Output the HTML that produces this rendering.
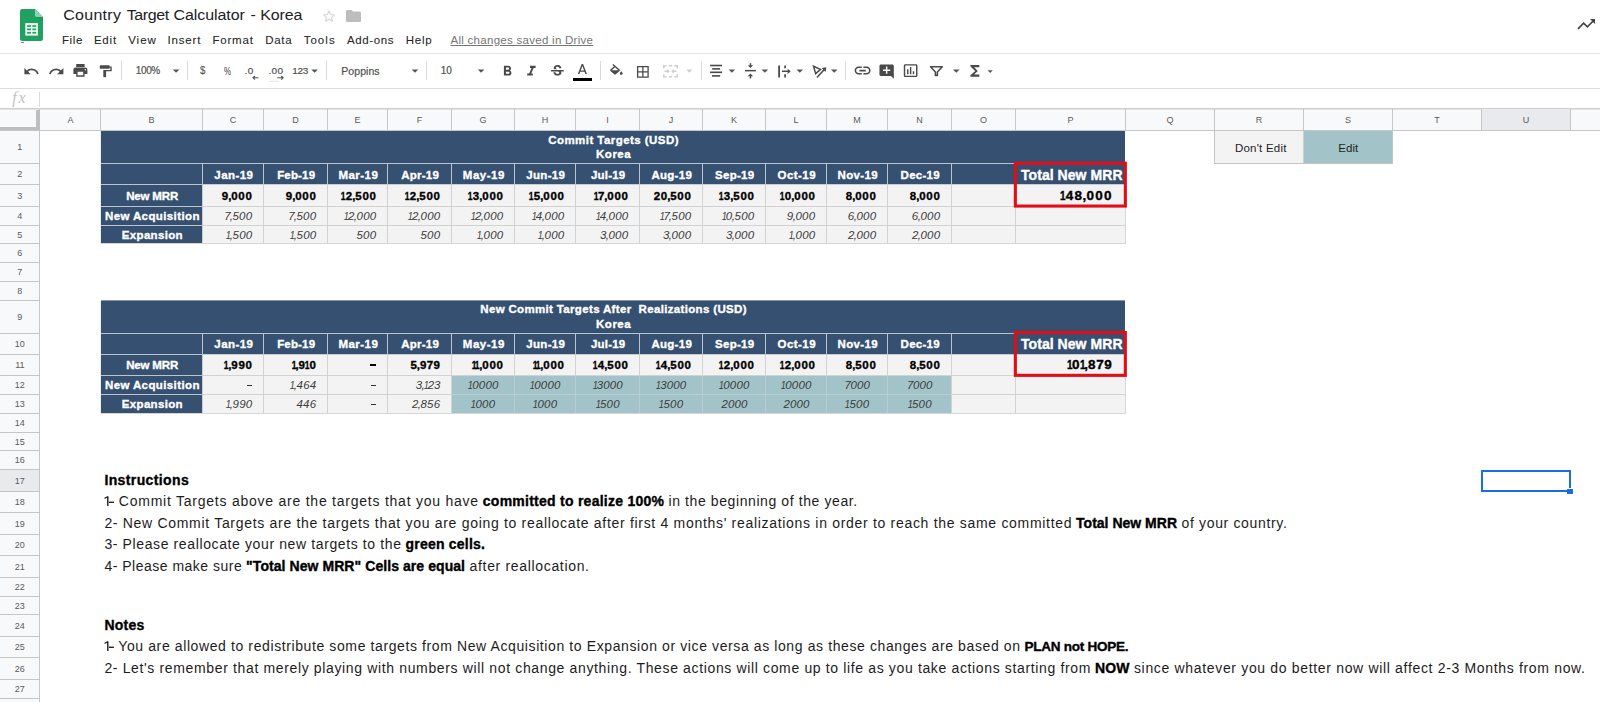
<!DOCTYPE html>
<html><head><meta charset="utf-8"><title>Country Target Calculator - Korea</title>
<style>
html,body{margin:0;padding:0;}
body{width:1600px;height:702px;overflow:hidden;background:#fff;position:relative;font-family:"Liberation Sans",sans-serif;}
.t{position:absolute;white-space:pre;line-height:20px;height:20px;}
.r{position:absolute;}
svg{position:absolute;overflow:visible;}
</style></head><body>

<svg style="left:20px;top:9px" width="23" height="32" viewBox="0 0 23 32">
<path d="M2.2 0 H15 L23 8 V29.8 Q23 32 20.8 32 H2.2 Q0 32 0 29.8 V2.2 Q0 0 2.2 0Z" fill="#20a162"/>
<path d="M15 0 L23 8 H16.8 Q15 8 15 6.2Z" fill="#8ed1b1"/>
<path d="M15.6 8 H23 V12.5 Z" fill="#1a8a52" opacity="0.45"/>
<rect x="5.3" y="14.1" width="12.6" height="12.5" fill="#eef8f2"/>
<g fill="#22a163"><rect x="7.1" y="16.2" width="3.9" height="1.7"/><rect x="12.4" y="16.2" width="3.7" height="1.7"/><rect x="7.1" y="19.5" width="3.9" height="1.7"/><rect x="12.4" y="19.5" width="3.7" height="1.7"/><rect x="7.1" y="22.9" width="3.9" height="1.7"/><rect x="12.4" y="22.9" width="3.7" height="1.7"/></g>
</svg>
<div class="r" style="left:20.8px;top:42px;width:2.8px;height:1px;background:#6b8f7c;"></div>
<span class="t" style="left:63.30px;top:5px;font-size:16px;letter-spacing:0.263px;transform:scaleY(0.915);transform-origin:0 15px;color:#202124;">Country</span>
<span class="t" style="left:126.70px;top:5px;font-size:16px;letter-spacing:-0.414px;transform:scaleY(0.915);transform-origin:0 15px;color:#202124;">Target</span>
<span class="t" style="left:173.60px;top:5px;font-size:16px;letter-spacing:-0.092px;transform:scaleY(0.915);transform-origin:0 15px;color:#202124;">Calculator</span>
<span class="t" style="left:250.40px;top:5px;font-size:16px;transform:scaleY(0.915);transform-origin:0 15px;color:#202124;">-</span>
<span class="t" style="left:260.30px;top:5px;font-size:16px;letter-spacing:-0.174px;transform:scaleY(0.915);transform-origin:0 15px;color:#202124;">Korea</span>
<svg style="left:321.5px;top:9px" width="14" height="14" viewBox="0 0 24 24"><path d="M12 3.2l2.7 6.2 6.7.6-5.1 4.4 1.5 6.6L12 17.5 6.2 21l1.5-6.6L2.6 10l6.7-.6z" fill="none" stroke="#d5d5d5" stroke-width="2" stroke-linejoin="round"/></svg>
<svg style="left:346px;top:10px" width="15" height="12" viewBox="0 0 15 12"><path d="M1.2 0 H5.5 L7 1.6 H13.8 Q15 1.6 15 2.8 V10.8 Q15 12 13.8 12 H1.2 Q0 12 0 10.8 V1.2 Q0 0 1.2 0Z" fill="#bdbdbd"/></svg>
<span class="t" style="left:61.90px;top:30px;font-size:11.5px;letter-spacing:0.657px;-webkit-text-stroke:0.08px #252525;color:#252525;">File</span>
<span class="t" style="left:93.90px;top:30px;font-size:11.5px;letter-spacing:0.811px;-webkit-text-stroke:0.08px #252525;color:#252525;">Edit</span>
<span class="t" style="left:128.15px;top:30px;font-size:11.5px;letter-spacing:1.011px;-webkit-text-stroke:0.08px #252525;color:#252525;">View</span>
<span class="t" style="left:167.40px;top:30px;font-size:11.5px;letter-spacing:0.848px;-webkit-text-stroke:0.08px #252525;color:#252525;">Insert</span>
<span class="t" style="left:212.40px;top:30px;font-size:11.5px;letter-spacing:0.816px;-webkit-text-stroke:0.08px #252525;color:#252525;">Format</span>
<span class="t" style="left:265.15px;top:30px;font-size:11.5px;letter-spacing:0.736px;-webkit-text-stroke:0.08px #252525;color:#252525;">Data</span>
<span class="t" style="left:303.65px;top:30px;font-size:11.5px;letter-spacing:1.038px;-webkit-text-stroke:0.08px #252525;color:#252525;">Tools</span>
<span class="t" style="left:346.90px;top:30px;font-size:11.5px;letter-spacing:0.611px;-webkit-text-stroke:0.08px #252525;color:#252525;">Add-ons</span>
<span class="t" style="left:405.65px;top:30px;font-size:11.5px;letter-spacing:0.783px;-webkit-text-stroke:0.08px #252525;color:#252525;">Help</span>
<span class="t" style="left:450.50px;top:30px;font-size:11.5px;letter-spacing:0.279px;color:#757575;text-decoration:underline;text-underline-offset:1px;">All changes saved in Drive</span>
<svg style="left:0;top:0" width="1600" height="50"><path d="M1578 28.8 L1583.6 23.2 L1587.4 26.9 L1593.2 21" fill="none" stroke="#444" stroke-width="1.7"/><path d="M1590 19 H1595 V24Z" fill="#444"/></svg>
<div class="r" style="left:0px;top:53px;width:1600px;height:1px;background:#e3e3e3;"></div>
<div class="r" style="left:0px;top:88px;width:1600px;height:1px;background:#dcdcdc;"></div>
<div class="r" style="left:0px;top:108px;width:1600px;height:1px;background:#cfcfcf;"></div>
<svg style="left:23.00px;top:62.70px" width="16.80" height="16.80" viewBox="0 0 24 24"><path d="M12.5 8c-2.65 0-5.05.99-6.9 2.6L2 7v9h9l-3.62-3.62c1.39-1.16 3.16-1.88 5.12-1.88 3.54 0 6.55 2.31 7.6 5.5l2.37-.78C21.08 11.03 17.15 8 12.5 8z" fill="#4a4a4a" /></svg>
<svg style="left:48.00px;top:62.70px" width="16.80" height="16.80" viewBox="0 0 24 24"><path d="M18.4 10.6C16.55 8.99 14.15 8 11.5 8c-4.65 0-8.58 3.03-9.96 7.22L3.9 16c1.05-3.19 4.05-5.5 7.6-5.5 1.95 0 3.73.72 5.12 1.88L13 16h9V7l-3.6 3.6z" fill="#4a4a4a" /></svg>
<svg style="left:72.30px;top:62.40px" width="16.80" height="16.80" viewBox="0 0 24 24"><path d="M19 8H5c-1.66 0-3 1.34-3 3v6h4v4h12v-4h4v-6c0-1.66-1.34-3-3-3zm-3 11H8v-5h8v5zm3-7c-.55 0-1-.45-1-1s.45-1 1-1 1 .45 1 1-.45 1-1 1zm-1-9H6v4h12V3z" fill="#4a4a4a" /></svg>
<svg style="left:96.9px;top:63.5px" width="16.8" height="14.4" viewBox="0 0 24 24" preserveAspectRatio="none"><path d="M18 4V3c0-.55-.45-1-1-1H5c-.55 0-1 .45-1 1v4c0 .55.45 1 1 1h12c.55 0 1-.45 1-1V6h1v4H9v11c0 .55.45 1 1 1h2c.55 0 1-.45 1-1v-9h8V4h-3z" fill="#4a4a4a"/></svg>
<div class="r" style="left:121px;top:61px;width:1px;height:19px;background:#dadada;"></div>
<span class="t" style="left:135.80px;top:61px;font-size:10px;letter-spacing:-0.392px;-webkit-text-stroke:0.2px #505050;color:#505050;">100%</span>
<svg style="left:0;top:0" width="1" height="1"><path d="M172.80 69.50 H179.40 L176.10 72.80Z" fill="#555"/></svg>
<div class="r" style="left:187px;top:61px;width:1px;height:19px;background:#dadada;"></div>
<span class="t" style="left:199.60px;top:60px;font-size:11.5px;-webkit-text-stroke:0.1px #505050;color:#505050;transform:scale(0.84,1.0);transform-origin:0 14px;">$</span>
<span class="t" style="left:223.90px;top:61px;font-size:11.5px;-webkit-text-stroke:0.1px #505050;color:#505050;transform:scale(0.68,1.0);transform-origin:0 14px;">%</span>
<span class="t" style="left:244.40px;top:61px;font-size:10px;letter-spacing:0.460px;transform:scaleY(0.86);transform-origin:0 13px;-webkit-text-stroke:0.2px #505050;color:#505050;">.0</span>
<span class="t" style="left:268.40px;top:61px;font-size:10px;letter-spacing:0.349px;transform:scaleY(0.86);transform-origin:0 13px;-webkit-text-stroke:0.2px #505050;color:#505050;">.00</span>
<svg style="left:0;top:0" width="400" height="90"><path d="M258.5 77.8 H253.2 M255 76 L253 77.8 L255 79.6" fill="none" stroke="#555" stroke-width="1.1"/><path d="M277.2 77.8 H283 M281.2 76 L283.2 77.8 L281.2 79.6" fill="none" stroke="#555" stroke-width="1.1"/><path d="M269 81.3 H279" stroke="#dbe9e2" stroke-width="1"/></svg>
<span class="t" style="left:292.30px;top:61px;font-size:10px;letter-spacing:-0.342px;transform:scaleY(0.86);transform-origin:0 13px;-webkit-text-stroke:0.2px #505050;color:#505050;">123</span>
<svg style="left:0;top:0" width="1" height="1"><path d="M311.30 69.50 H317.90 L314.60 72.80Z" fill="#555"/></svg>
<div class="r" style="left:326px;top:61px;width:1px;height:19px;background:#dadada;"></div>
<span class="t" style="left:341.30px;top:61px;font-size:10.5px;letter-spacing:0.059px;-webkit-text-stroke:0.2px #505050;color:#505050;">Poppins</span>
<svg style="left:0;top:0" width="1" height="1"><path d="M411.70 69.50 H418.30 L415.00 72.80Z" fill="#555"/></svg>
<div class="r" style="left:426px;top:61px;width:1px;height:19px;background:#dadada;"></div>
<span class="t" style="left:440.70px;top:61px;font-size:10px;letter-spacing:-0.123px;-webkit-text-stroke:0.2px #505050;color:#505050;">10</span>
<svg style="left:0;top:0" width="1" height="1"><path d="M477.80 69.50 H484.30 L481.05 72.80Z" fill="#555"/></svg>
<svg style="left:498.60px;top:62.60px" width="16.80" height="16.80" viewBox="0 0 24 24"><path d="M15.6 10.79c.97-.67 1.65-1.77 1.65-2.79 0-2.26-1.75-4-4-4H7v14h7.04c2.09 0 3.71-1.7 3.71-3.79 0-1.52-.86-2.82-2.15-3.42zM10 6.5h3c.83 0 1.5.67 1.5 1.5s-.67 1.5-1.5 1.5h-3v-3zm3.5 9H10v-3h3.5c.83 0 1.5.67 1.5 1.5s-.67 1.5-1.5 1.5z" fill="#4a4a4a" /></svg>
<svg style="left:523.00px;top:62.60px" width="16.80" height="16.80" viewBox="0 0 24 24"><path d="M10 4v3h2.21l-3.42 8H6v3h8v-3h-2.21l3.42-8H18V4z" fill="#4a4a4a" /></svg>
<svg style="left:548.80px;top:62.90px" width="16.80" height="16.80" viewBox="0 0 24 24"><path d="M7.24 8.75c-.26-.48-.39-1.03-.39-1.67 0-.61.13-1.16.4-1.67.26-.5.63-.93 1.11-1.29.48-.35 1.05-.63 1.7-.83.66-.19 1.39-.29 2.18-.29.81 0 1.54.11 2.21.34.66.22 1.23.54 1.69.94.47.4.83.88 1.08 1.43.25.55.38 1.15.38 1.81h-3.01c0-.31-.05-.59-.15-.85-.09-.27-.24-.49-.44-.68-.2-.19-.45-.33-.75-.44-.3-.1-.66-.16-1.06-.16-.39 0-.74.04-1.03.13-.29.09-.53.21-.72.36-.19.16-.34.34-.44.55-.1.21-.15.43-.15.66 0 .48.25.88.74 1.21.38.25.77.48 1.41.7H7.39c-.05-.08-.11-.17-.15-.25zM21 12v-2H3v2h9.62c.18.07.4.14.55.2.37.17.66.34.87.51.21.17.35.36.43.57.07.2.11.43.11.69 0 .23-.05.45-.14.66-.09.2-.23.38-.42.53-.19.15-.42.26-.71.35-.29.08-.63.13-1.01.13-.43 0-.83-.04-1.18-.13s-.66-.23-.91-.42c-.25-.19-.45-.44-.59-.75-.14-.31-.25-.76-.25-1.21H6.4c0 .55.08 1.13.24 1.58.16.45.37.85.65 1.21.28.35.6.66.98.92.37.26.78.48 1.22.65.44.17.9.3 1.38.39.48.08.96.13 1.44.13.8 0 1.53-.09 2.18-.28s1.21-.45 1.67-.79c.46-.34.82-.77 1.07-1.27s.38-1.07.38-1.71c0-.6-.1-1.14-.31-1.61-.05-.11-.11-.23-.17-.33H21z" fill="#4a4a4a" /></svg>
<svg style="left:573.85px;top:61.80px" width="16.80" height="16.80" viewBox="0 0 24 24"><path d="M11 3L5.5 17h2.25l1.12-3h6.25l1.12 3h2.25L13 3h-2zm-1.38 9L12 5.67 14.38 12H9.62z" fill="#4a4a4a" /></svg>
<div class="r" style="left:573.2px;top:78px;width:18.9px;height:3px;background:#000;"></div>
<div class="r" style="left:599.6px;top:61px;width:1px;height:19px;background:#dadada;"></div>
<svg style="left:608.4px;top:63.7px" width="16.8" height="15" viewBox="0 0 24 24" preserveAspectRatio="none"><path d="M16.56 8.94L7.62 0 6.21 1.41l2.38 2.38-5.15 5.15c-.59.59-.59 1.54 0 2.12l5.5 5.5c.29.29.68.44 1.06.44s.77-.15 1.06-.44l5.5-5.5c.59-.58.59-1.53 0-2.12zM5.21 10L10 5.21 14.79 10H5.21zM19 11.5s-2 2.17-2 3.5c0 1.1.9 2 2 2s2-.9 2-2c0-1.33-2-3.5-2-3.5z" fill="#4a4a4a"/></svg>
<svg style="left:635.10px;top:63.50px" width="15.72" height="15.72" viewBox="0 0 24 24"><path d="M3 3v18h18V3H3zm8 16H5v-6h6v6zm0-8H5V5h6v6zm8 8h-6v-6h6v6zm0-8h-6V5h6v6z" fill="#4a4a4a" /></svg>
<svg style="left:663px;top:65px" width="15" height="12.5" viewBox="0 0 15 12.5"><g fill="none" stroke="#cfcfcf" stroke-width="1.5"><path d="M0.75 3.2 V0.75 H3.6 M5.8 0.75 H9.2 M11.4 0.75 H14.25 V3.2 M0.75 9.3 V11.75 H3.6 M5.8 11.75 H9.2 M11.4 11.75 H14.25 V9.3"/><path d="M1.5 6.25 H5.8 M4.2 4.6 L5.9 6.25 L4.2 7.9 M13.5 6.25 H9.2 M10.8 4.6 L9.1 6.25 L10.8 7.9" stroke-width="1.3"/></g></svg>
<svg style="left:0;top:0" width="1" height="1"><path d="M686.00 69.50 H692.60 L689.30 72.80Z" fill="#d0d0d0"/></svg>
<div class="r" style="left:701px;top:61px;width:1px;height:19px;background:#dadada;"></div>
<svg style="left:0;top:0" width="900" height="90"><g fill="#4a4a4a"><rect x="710.1" y="64.7" width="11.9" height="1.6"/><rect x="712.2" y="68.1" width="7.9" height="1.6"/><rect x="710.1" y="71.5" width="11.9" height="1.6"/><rect x="712" y="75.1" width="8.2" height="1.6"/></g></svg>
<svg style="left:0;top:0" width="1" height="1"><path d="M728.60 69.50 H735.10 L731.85 72.80Z" fill="#555"/></svg>
<svg style="left:0;top:0" width="900" height="90"><g fill="#4a4a4a"><rect x="745" y="69.9" width="10.9" height="1.5"/><rect x="749.7" y="63.2" width="1.5" height="2.6"/><path d="M747.8 65.2 H753.1 L750.45 67.9Z"/><rect x="749.7" y="75.8" width="1.5" height="2.7"/><path d="M747.8 76.3 H753.1 L750.45 73.6Z"/></g></svg>
<svg style="left:0;top:0" width="1" height="1"><path d="M761.60 69.50 H768.20 L764.90 72.80Z" fill="#555"/></svg>
<svg style="left:778px;top:63.5px" width="14" height="15" viewBox="0 0 14 15"><g fill="none" stroke="#4a4a4a"><path d="M1.1 1.4 V13.5" stroke-width="1.8"/><path d="M7.1 1.4 V4.3 M7.1 10.3 V13.5" stroke-width="1.7"/><path d="M4 7.3 H11.2" stroke-width="1.5"/></g><path d="M9.6 4.7 L12.7 7.3 L9.6 9.9Z" fill="#4a4a4a"/></svg>
<svg style="left:0;top:0" width="1" height="1"><path d="M796.50 69.50 H803.10 L799.80 72.80Z" fill="#555"/></svg>
<svg style="left:812px;top:63.5px" width="15" height="15" viewBox="0 0 15 15"><g fill="none" stroke="#4a4a4a" stroke-width="1.5" stroke-linejoin="miter"><path d="M1.5 2.2 L8.5 5.4 L3.7 9.6 Z"/><path d="M4.9 13.4 L12.6 5.2"/></g><path d="M9.6 3.9 L14.3 3.2 L13.6 7.9Z" fill="#4a4a4a"/></svg>
<svg style="left:0;top:0" width="1" height="1"><path d="M830.90 69.50 H837.50 L834.20 72.80Z" fill="#555"/></svg>
<div class="r" style="left:845px;top:61px;width:1px;height:19px;background:#dadada;"></div>
<svg style="left:852.60px;top:61.25px" width="19.20" height="19.20" viewBox="0 0 24 24"><path d="M3.9 12c0-1.71 1.39-3.1 3.1-3.1h4V7H7c-2.76 0-5 2.24-5 5s2.24 5 5 5h4v-1.9H7c-1.71 0-3.1-1.39-3.1-3.1zM8 13h8v-2H8v2zm9-6h-4v1.9h4c1.71 0 3.1 1.39 3.1 3.1s-1.39 3.1-3.1 3.1h-4V17h4c2.76 0 5-2.24 5-5s-2.24-5-5-5z" fill="#4a4a4a" /></svg>
<svg style="left:877.90px;top:62.70px" width="17.28" height="17.28" viewBox="0 0 24 24"><path d="M21.99 4c0-1.1-.89-2-1.99-2H4c-1.1 0-2 .9-2 2v12c0 1.1.9 2 2 2h14l4 4-.01-18zM17 11h-4v4h-2v-4H7V9h4V5h2v4h4v2z" fill="#4a4a4a" /></svg>
<svg style="left:902.40px;top:62.30px" width="17.28" height="17.28" viewBox="0 0 24 24"><path d="M9 17H7v-7h2v7zm4 0h-2V7h2v10zm4 0h-2v-4h2v4zm2.5 2.1h-15V5h15v14.1zm0-16.1h-15c-1.1 0-2 .9-2 2v14c0 1.1.9 2 2 2h15c1.1 0 2-.9 2-2V5c0-1.1-.9-2-2-2z" fill="#4a4a4a" /></svg>
<svg style="left:930px;top:65.6px" width="12.8" height="10.3" viewBox="0 0 14 11.5" preserveAspectRatio="none"><path d="M0.6 0.9 H13.4 L8.1 6.6 V10.6 H5.9 V6.6 Z" fill="none" stroke="#4a4a4a" stroke-width="1.7" stroke-linejoin="round"/></svg>
<svg style="left:0;top:0" width="1" height="1"><path d="M952.90 69.50 H959.60 L956.25 72.80Z" fill="#555"/></svg>
<svg style="left:965.60px;top:62.20px" width="17.76" height="17.76" viewBox="0 0 24 24"><path d="M18 4H6v2l6.5 6L6 18v2h12v-3h-7l5-5-5-5h7V4z" fill="#4a4a4a" /></svg>
<svg style="left:0;top:0" width="1" height="1"><path d="M987.60 70.30 H992.80 L990.20 73.00Z" fill="#555"/></svg>
<span class="t" style="left:12.2px;top:88.2px;font-family:'Liberation Serif',serif;font-style:italic;font-size:16px;color:#c2c2c2;letter-spacing:1.9px;">fx</span>
<div class="r" style="left:39px;top:92px;width:1px;height:15px;background:#dcdcdc;"></div>
<div class="r" style="left:0px;top:109px;width:1600px;height:21px;background:#f8f9fa;"></div>
<div class="r" style="left:0px;top:109px;width:1600px;height:1px;background:#e2e3e4;"></div>
<div class="r" style="left:0px;top:131px;width:39px;height:571px;background:#f8f9fa;"></div>
<div class="r" style="left:1482px;top:109px;width:88px;height:21px;background:#e8eaed;"></div>
<div class="r" style="left:0px;top:470px;width:39px;height:21px;background:#e8eaed;"></div>
<div class="r" style="left:0px;top:130px;width:1600px;height:1px;background:#c6c6c6;"></div>
<div class="r" style="left:39px;top:109px;width:1px;height:593px;background:#c6c6c6;"></div>
<div class="r" style="left:36px;top:110px;width:4px;height:20px;background:#bfbfbf;"></div>
<div class="r" style="left:0px;top:127px;width:40px;height:3px;background:#bfbfbf;"></div>
<div class="r" style="left:100px;top:109px;width:1px;height:21px;background:#c6c6c6;"></div>
<span class="t" style="left:67.50px;top:110px;font-size:9px;color:#5a5a5a;">A</span>
<div class="r" style="left:202px;top:109px;width:1px;height:21px;background:#c6c6c6;"></div>
<span class="t" style="left:148.50px;top:110px;font-size:9px;color:#5a5a5a;">B</span>
<div class="r" style="left:263px;top:109px;width:1px;height:21px;background:#c6c6c6;"></div>
<span class="t" style="left:229.75px;top:110px;font-size:9px;color:#5a5a5a;">C</span>
<div class="r" style="left:327px;top:109px;width:1px;height:21px;background:#c6c6c6;"></div>
<span class="t" style="left:292.25px;top:110px;font-size:9px;color:#5a5a5a;">D</span>
<div class="r" style="left:387px;top:109px;width:1px;height:21px;background:#c6c6c6;"></div>
<span class="t" style="left:354.50px;top:110px;font-size:9px;color:#5a5a5a;">E</span>
<div class="r" style="left:451px;top:109px;width:1px;height:21px;background:#c6c6c6;"></div>
<span class="t" style="left:416.75px;top:110px;font-size:9px;color:#5a5a5a;">F</span>
<div class="r" style="left:514px;top:109px;width:1px;height:21px;background:#c6c6c6;"></div>
<span class="t" style="left:479.50px;top:110px;font-size:9px;color:#5a5a5a;">G</span>
<div class="r" style="left:575px;top:109px;width:1px;height:21px;background:#c6c6c6;"></div>
<span class="t" style="left:541.75px;top:110px;font-size:9px;color:#5a5a5a;">H</span>
<div class="r" style="left:639px;top:109px;width:1px;height:21px;background:#c6c6c6;"></div>
<span class="t" style="left:606.25px;top:110px;font-size:9px;color:#5a5a5a;">I</span>
<div class="r" style="left:702px;top:109px;width:1px;height:21px;background:#c6c6c6;"></div>
<span class="t" style="left:668.75px;top:110px;font-size:9px;color:#5a5a5a;">J</span>
<div class="r" style="left:765px;top:109px;width:1px;height:21px;background:#c6c6c6;"></div>
<span class="t" style="left:731.00px;top:110px;font-size:9px;color:#5a5a5a;">K</span>
<div class="r" style="left:826px;top:109px;width:1px;height:21px;background:#c6c6c6;"></div>
<span class="t" style="left:793.50px;top:110px;font-size:9px;color:#5a5a5a;">L</span>
<div class="r" style="left:887px;top:109px;width:1px;height:21px;background:#c6c6c6;"></div>
<span class="t" style="left:853.25px;top:110px;font-size:9px;color:#5a5a5a;">M</span>
<div class="r" style="left:951px;top:109px;width:1px;height:21px;background:#c6c6c6;"></div>
<span class="t" style="left:916.25px;top:110px;font-size:9px;color:#5a5a5a;">N</span>
<div class="r" style="left:1015px;top:109px;width:1px;height:21px;background:#c6c6c6;"></div>
<span class="t" style="left:980.00px;top:110px;font-size:9px;color:#5a5a5a;">O</span>
<div class="r" style="left:1125px;top:109px;width:1px;height:21px;background:#c6c6c6;"></div>
<span class="t" style="left:1067.50px;top:110px;font-size:9px;color:#5a5a5a;">P</span>
<div class="r" style="left:1214px;top:109px;width:1px;height:21px;background:#c6c6c6;"></div>
<span class="t" style="left:1166.50px;top:110px;font-size:9px;color:#5a5a5a;">Q</span>
<div class="r" style="left:1303px;top:109px;width:1px;height:21px;background:#c6c6c6;"></div>
<span class="t" style="left:1255.75px;top:110px;font-size:9px;color:#5a5a5a;">R</span>
<div class="r" style="left:1392px;top:109px;width:1px;height:21px;background:#c6c6c6;"></div>
<span class="t" style="left:1345.00px;top:110px;font-size:9px;color:#5a5a5a;">S</span>
<div class="r" style="left:1481px;top:109px;width:1px;height:21px;background:#c6c6c6;"></div>
<span class="t" style="left:1434.25px;top:110px;font-size:9px;color:#5a5a5a;">T</span>
<div class="r" style="left:1570px;top:109px;width:1px;height:21px;background:#c6c6c6;"></div>
<span class="t" style="left:1522.75px;top:110px;font-size:9px;color:#5a5a5a;">U</span>
<div class="r" style="left:0px;top:163px;width:40px;height:1px;background:#c6c6c6;"></div>
<span class="t" style="left:17.30px;top:137px;font-size:9px;color:#5a5a5a;">1</span>
<div class="r" style="left:0px;top:184px;width:40px;height:1px;background:#c6c6c6;"></div>
<span class="t" style="left:17.30px;top:164px;font-size:9px;color:#5a5a5a;">2</span>
<div class="r" style="left:0px;top:206px;width:40px;height:1px;background:#c6c6c6;"></div>
<span class="t" style="left:17.30px;top:186px;font-size:9px;color:#5a5a5a;">3</span>
<div class="r" style="left:0px;top:225px;width:40px;height:1px;background:#c6c6c6;"></div>
<span class="t" style="left:17.30px;top:206px;font-size:9px;color:#5a5a5a;">4</span>
<div class="r" style="left:0px;top:243px;width:40px;height:1px;background:#c6c6c6;"></div>
<span class="t" style="left:17.30px;top:225px;font-size:9px;color:#5a5a5a;">5</span>
<div class="r" style="left:0px;top:262px;width:40px;height:1px;background:#c6c6c6;"></div>
<span class="t" style="left:17.30px;top:243px;font-size:9px;color:#5a5a5a;">6</span>
<div class="r" style="left:0px;top:281px;width:40px;height:1px;background:#c6c6c6;"></div>
<span class="t" style="left:17.30px;top:262px;font-size:9px;color:#5a5a5a;">7</span>
<div class="r" style="left:0px;top:300px;width:40px;height:1px;background:#c6c6c6;"></div>
<span class="t" style="left:17.30px;top:281px;font-size:9px;color:#5a5a5a;">8</span>
<div class="r" style="left:0px;top:333px;width:40px;height:1px;background:#c6c6c6;"></div>
<span class="t" style="left:17.30px;top:307px;font-size:9px;color:#5a5a5a;">9</span>
<div class="r" style="left:0px;top:354px;width:40px;height:1px;background:#c6c6c6;"></div>
<span class="t" style="left:14.79px;top:334px;font-size:9px;color:#5a5a5a;">10</span>
<div class="r" style="left:0px;top:375px;width:40px;height:1px;background:#c6c6c6;"></div>
<span class="t" style="left:15.13px;top:355px;font-size:9px;color:#5a5a5a;">11</span>
<div class="r" style="left:0px;top:394px;width:40px;height:1px;background:#c6c6c6;"></div>
<span class="t" style="left:14.79px;top:375px;font-size:9px;color:#5a5a5a;">12</span>
<div class="r" style="left:0px;top:413px;width:40px;height:1px;background:#c6c6c6;"></div>
<span class="t" style="left:14.79px;top:394px;font-size:9px;color:#5a5a5a;">13</span>
<div class="r" style="left:0px;top:432px;width:40px;height:1px;background:#c6c6c6;"></div>
<span class="t" style="left:14.79px;top:413px;font-size:9px;color:#5a5a5a;">14</span>
<div class="r" style="left:0px;top:450px;width:40px;height:1px;background:#c6c6c6;"></div>
<span class="t" style="left:14.79px;top:432px;font-size:9px;color:#5a5a5a;">15</span>
<div class="r" style="left:0px;top:469px;width:40px;height:1px;background:#c6c6c6;"></div>
<span class="t" style="left:14.79px;top:450px;font-size:9px;color:#5a5a5a;">16</span>
<div class="r" style="left:0px;top:491px;width:40px;height:1px;background:#c6c6c6;"></div>
<span class="t" style="left:14.79px;top:471px;font-size:9px;color:#5a5a5a;">17</span>
<div class="r" style="left:0px;top:512px;width:40px;height:1px;background:#c6c6c6;"></div>
<span class="t" style="left:14.79px;top:492px;font-size:9px;color:#5a5a5a;">18</span>
<div class="r" style="left:0px;top:534px;width:40px;height:1px;background:#c6c6c6;"></div>
<span class="t" style="left:14.79px;top:514px;font-size:9px;color:#5a5a5a;">19</span>
<div class="r" style="left:0px;top:555px;width:40px;height:1px;background:#c6c6c6;"></div>
<span class="t" style="left:14.79px;top:535px;font-size:9px;color:#5a5a5a;">20</span>
<div class="r" style="left:0px;top:577px;width:40px;height:1px;background:#c6c6c6;"></div>
<span class="t" style="left:14.79px;top:557px;font-size:9px;color:#5a5a5a;">21</span>
<div class="r" style="left:0px;top:596px;width:40px;height:1px;background:#c6c6c6;"></div>
<span class="t" style="left:14.79px;top:577px;font-size:9px;color:#5a5a5a;">22</span>
<div class="r" style="left:0px;top:614px;width:40px;height:1px;background:#c6c6c6;"></div>
<span class="t" style="left:14.79px;top:596px;font-size:9px;color:#5a5a5a;">23</span>
<div class="r" style="left:0px;top:636px;width:40px;height:1px;background:#c6c6c6;"></div>
<span class="t" style="left:14.79px;top:616px;font-size:9px;color:#5a5a5a;">24</span>
<div class="r" style="left:0px;top:657px;width:40px;height:1px;background:#c6c6c6;"></div>
<span class="t" style="left:14.79px;top:637px;font-size:9px;color:#5a5a5a;">25</span>
<div class="r" style="left:0px;top:679px;width:40px;height:1px;background:#c6c6c6;"></div>
<span class="t" style="left:14.79px;top:659px;font-size:9px;color:#5a5a5a;">26</span>
<div class="r" style="left:0px;top:698px;width:40px;height:1px;background:#c6c6c6;"></div>
<span class="t" style="left:14.79px;top:679px;font-size:9px;color:#5a5a5a;">27</span>
<div class="r" style="left:101px;top:131px;width:1024px;height:53px;background:#355070;"></div>
<div class="r" style="left:101px;top:185px;width:101px;height:58px;background:#355070;"></div>
<div class="r" style="left:203px;top:185px;width:922px;height:58px;background:#f3f3f3;"></div>
<div class="r" style="left:101px;top:163px;width:1024px;height:1px;background:#bcc4ce;"></div>
<div class="r" style="left:101px;top:184px;width:102px;height:1px;background:#bcc4ce;"></div>
<div class="r" style="left:203px;top:184px;width:923px;height:1px;background:#c9cdd3;"></div>
<div class="r" style="left:101px;top:206px;width:102px;height:1px;background:#bcc4ce;"></div>
<div class="r" style="left:203px;top:206px;width:923px;height:1px;background:#d2d2d2;"></div>
<div class="r" style="left:101px;top:225px;width:102px;height:1px;background:#bcc4ce;"></div>
<div class="r" style="left:203px;top:225px;width:923px;height:1px;background:#d2d2d2;"></div>
<div class="r" style="left:101px;top:243px;width:1025px;height:1px;background:#d6d6d6;"></div>
<div class="r" style="left:202px;top:164px;width:1px;height:20px;background:#bcc4ce;"></div>
<div class="r" style="left:202px;top:185px;width:1px;height:58px;background:#c9cdd3;"></div>
<div class="r" style="left:263px;top:164px;width:1px;height:20px;background:#bcc4ce;"></div>
<div class="r" style="left:263px;top:185px;width:1px;height:58px;background:#d2d2d2;"></div>
<div class="r" style="left:327px;top:164px;width:1px;height:20px;background:#bcc4ce;"></div>
<div class="r" style="left:327px;top:185px;width:1px;height:58px;background:#d2d2d2;"></div>
<div class="r" style="left:387px;top:164px;width:1px;height:20px;background:#bcc4ce;"></div>
<div class="r" style="left:387px;top:185px;width:1px;height:58px;background:#d2d2d2;"></div>
<div class="r" style="left:451px;top:164px;width:1px;height:20px;background:#bcc4ce;"></div>
<div class="r" style="left:451px;top:185px;width:1px;height:58px;background:#d2d2d2;"></div>
<div class="r" style="left:514px;top:164px;width:1px;height:20px;background:#bcc4ce;"></div>
<div class="r" style="left:514px;top:185px;width:1px;height:58px;background:#d2d2d2;"></div>
<div class="r" style="left:575px;top:164px;width:1px;height:20px;background:#bcc4ce;"></div>
<div class="r" style="left:575px;top:185px;width:1px;height:58px;background:#d2d2d2;"></div>
<div class="r" style="left:639px;top:164px;width:1px;height:20px;background:#bcc4ce;"></div>
<div class="r" style="left:639px;top:185px;width:1px;height:58px;background:#d2d2d2;"></div>
<div class="r" style="left:702px;top:164px;width:1px;height:20px;background:#bcc4ce;"></div>
<div class="r" style="left:702px;top:185px;width:1px;height:58px;background:#d2d2d2;"></div>
<div class="r" style="left:765px;top:164px;width:1px;height:20px;background:#bcc4ce;"></div>
<div class="r" style="left:765px;top:185px;width:1px;height:58px;background:#d2d2d2;"></div>
<div class="r" style="left:826px;top:164px;width:1px;height:20px;background:#bcc4ce;"></div>
<div class="r" style="left:826px;top:185px;width:1px;height:58px;background:#d2d2d2;"></div>
<div class="r" style="left:887px;top:164px;width:1px;height:20px;background:#bcc4ce;"></div>
<div class="r" style="left:887px;top:185px;width:1px;height:58px;background:#d2d2d2;"></div>
<div class="r" style="left:951px;top:164px;width:1px;height:20px;background:#bcc4ce;"></div>
<div class="r" style="left:951px;top:185px;width:1px;height:58px;background:#d2d2d2;"></div>
<div class="r" style="left:1015px;top:164px;width:1px;height:20px;background:#bcc4ce;"></div>
<div class="r" style="left:1015px;top:185px;width:1px;height:58px;background:#d2d2d2;"></div>
<div class="r" style="left:1125px;top:185px;width:1px;height:59px;background:#d6d6d6;"></div>
<div class="r" style="left:100px;top:131px;width:1px;height:113px;background:#e9ecef;"></div>
<span class="t" style="left:548.20px;top:130px;font-size:11.5px;font-weight:bold;letter-spacing:0.451px;-webkit-text-stroke:0.35px #fff;color:#fff;">Commit Targets (USD)</span>
<span class="t" style="left:596.10px;top:144px;font-size:11.5px;font-weight:bold;letter-spacing:0.476px;-webkit-text-stroke:0.35px #fff;color:#fff;">Korea</span>
<span class="t" style="left:214.35px;top:165px;font-size:11.5px;font-weight:bold;letter-spacing:0.413px;-webkit-text-stroke:0.35px #fff;color:#fff;">Jan-19</span>
<span class="t" style="left:277.15px;top:165px;font-size:11.5px;font-weight:bold;letter-spacing:0.167px;-webkit-text-stroke:0.35px #fff;color:#fff;">Feb-19</span>
<span class="t" style="left:338.40px;top:165px;font-size:11.5px;font-weight:bold;letter-spacing:0.466px;-webkit-text-stroke:0.35px #fff;color:#fff;">Mar-19</span>
<span class="t" style="left:401.35px;top:165px;font-size:11.5px;font-weight:bold;letter-spacing:0.215px;-webkit-text-stroke:0.35px #fff;color:#fff;">Apr-19</span>
<span class="t" style="left:462.85px;top:165px;font-size:11.5px;font-weight:bold;letter-spacing:0.502px;-webkit-text-stroke:0.35px #fff;color:#fff;">May-19</span>
<span class="t" style="left:526.30px;top:165px;font-size:11.5px;font-weight:bold;letter-spacing:0.307px;-webkit-text-stroke:0.35px #fff;color:#fff;">Jun-19</span>
<span class="t" style="left:591.00px;top:165px;font-size:11.5px;font-weight:bold;letter-spacing:0.193px;-webkit-text-stroke:0.35px #fff;color:#fff;">Jul-19</span>
<span class="t" style="left:651.40px;top:165px;font-size:11.5px;font-weight:bold;letter-spacing:0.285px;-webkit-text-stroke:0.35px #fff;color:#fff;">Aug-19</span>
<span class="t" style="left:715.10px;top:165px;font-size:11.5px;font-weight:bold;letter-spacing:0.258px;-webkit-text-stroke:0.35px #fff;color:#fff;">Sep-19</span>
<span class="t" style="left:777.60px;top:165px;font-size:11.5px;font-weight:bold;letter-spacing:0.442px;-webkit-text-stroke:0.35px #fff;color:#fff;">Oct-19</span>
<span class="t" style="left:837.60px;top:165px;font-size:11.5px;font-weight:bold;letter-spacing:0.331px;-webkit-text-stroke:0.35px #fff;color:#fff;">Nov-19</span>
<span class="t" style="left:900.60px;top:165px;font-size:11.5px;font-weight:bold;letter-spacing:0.256px;-webkit-text-stroke:0.35px #fff;color:#fff;">Dec-19</span>
<span class="t" style="left:126.20px;top:186px;font-size:11.5px;font-weight:bold;letter-spacing:-0.172px;-webkit-text-stroke:0.35px #fff;color:#fff;">New MRR</span>
<span class="t" style="left:104.95px;top:206px;font-size:11.5px;font-weight:bold;letter-spacing:0.391px;-webkit-text-stroke:0.35px #fff;color:#fff;">New Acquisition</span>
<span class="t" style="left:121.80px;top:225px;font-size:11.5px;font-weight:bold;letter-spacing:0.331px;-webkit-text-stroke:0.35px #fff;color:#fff;">Expansion</span>
<span class="t" style="left:221.48px;top:186px;font-size:11.5px;font-weight:bold;-webkit-text-stroke:0.35px #000;color:#000;"><span style="margin:0 0.32px">9</span><span style="margin:0 -0.35px">,</span><span style="margin:0 0.32px">0</span><span style="margin:0 0.32px">0</span><span style="margin:0 0.32px">0</span></span>
<span class="t" style="left:285.48px;top:186px;font-size:11.5px;font-weight:bold;-webkit-text-stroke:0.35px #000;color:#000;"><span style="margin:0 0.32px">9</span><span style="margin:0 -0.35px">,</span><span style="margin:0 0.32px">0</span><span style="margin:0 0.32px">0</span><span style="margin:0 0.32px">0</span></span>
<span class="t" style="left:341.68px;top:186px;font-size:11.5px;font-weight:bold;-webkit-text-stroke:0.35px #000;color:#000;"><span style="display:inline-block;transform:scaleX(0.74);margin:0 -1.30px">1</span><span style="margin:0 0.32px">2</span><span style="margin:0 -0.35px">,</span><span style="margin:0 0.32px">5</span><span style="margin:0 0.32px">0</span><span style="margin:0 0.32px">0</span></span>
<span class="t" style="left:405.68px;top:186px;font-size:11.5px;font-weight:bold;-webkit-text-stroke:0.35px #000;color:#000;"><span style="display:inline-block;transform:scaleX(0.74);margin:0 -1.30px">1</span><span style="margin:0 0.32px">2</span><span style="margin:0 -0.35px">,</span><span style="margin:0 0.32px">5</span><span style="margin:0 0.32px">0</span><span style="margin:0 0.32px">0</span></span>
<span class="t" style="left:468.68px;top:186px;font-size:11.5px;font-weight:bold;-webkit-text-stroke:0.35px #000;color:#000;"><span style="display:inline-block;transform:scaleX(0.74);margin:0 -1.30px">1</span><span style="margin:0 0.32px">3</span><span style="margin:0 -0.35px">,</span><span style="margin:0 0.32px">0</span><span style="margin:0 0.32px">0</span><span style="margin:0 0.32px">0</span></span>
<span class="t" style="left:529.68px;top:186px;font-size:11.5px;font-weight:bold;-webkit-text-stroke:0.35px #000;color:#000;"><span style="display:inline-block;transform:scaleX(0.74);margin:0 -1.30px">1</span><span style="margin:0 0.32px">5</span><span style="margin:0 -0.35px">,</span><span style="margin:0 0.32px">0</span><span style="margin:0 0.32px">0</span><span style="margin:0 0.32px">0</span></span>
<span class="t" style="left:594.31px;top:186px;font-size:11.5px;font-weight:bold;-webkit-text-stroke:0.35px #000;color:#000;"><span style="display:inline-block;transform:scaleX(0.74);margin:0 -1.30px">1</span><span style="margin:0 0.00px">7</span><span style="margin:0 -0.35px">,</span><span style="margin:0 0.32px">0</span><span style="margin:0 0.32px">0</span><span style="margin:0 0.32px">0</span></span>
<span class="t" style="left:653.45px;top:186px;font-size:11.5px;font-weight:bold;-webkit-text-stroke:0.35px #000;color:#000;"><span style="margin:0 0.32px">2</span><span style="margin:0 0.32px">0</span><span style="margin:0 -0.35px">,</span><span style="margin:0 0.32px">5</span><span style="margin:0 0.32px">0</span><span style="margin:0 0.32px">0</span></span>
<span class="t" style="left:719.68px;top:186px;font-size:11.5px;font-weight:bold;-webkit-text-stroke:0.35px #000;color:#000;"><span style="display:inline-block;transform:scaleX(0.74);margin:0 -1.30px">1</span><span style="margin:0 0.32px">3</span><span style="margin:0 -0.35px">,</span><span style="margin:0 0.32px">5</span><span style="margin:0 0.32px">0</span><span style="margin:0 0.32px">0</span></span>
<span class="t" style="left:780.68px;top:186px;font-size:11.5px;font-weight:bold;-webkit-text-stroke:0.35px #000;color:#000;"><span style="display:inline-block;transform:scaleX(0.74);margin:0 -1.30px">1</span><span style="margin:0 0.32px">0</span><span style="margin:0 -0.35px">,</span><span style="margin:0 0.32px">0</span><span style="margin:0 0.32px">0</span><span style="margin:0 0.32px">0</span></span>
<span class="t" style="left:845.48px;top:186px;font-size:11.5px;font-weight:bold;-webkit-text-stroke:0.35px #000;color:#000;"><span style="margin:0 0.32px">8</span><span style="margin:0 -0.35px">,</span><span style="margin:0 0.32px">0</span><span style="margin:0 0.32px">0</span><span style="margin:0 0.32px">0</span></span>
<span class="t" style="left:909.48px;top:186px;font-size:11.5px;font-weight:bold;-webkit-text-stroke:0.35px #000;color:#000;"><span style="margin:0 0.32px">8</span><span style="margin:0 -0.35px">,</span><span style="margin:0 0.32px">0</span><span style="margin:0 0.32px">0</span><span style="margin:0 0.32px">0</span></span>
<span class="t" style="left:224.85px;top:206px;font-size:11.5px;font-style:italic;color:#3c3c3c;"><span style="margin:0 -0.50px">7</span><span style="margin:0 -0.50px">,</span><span style="margin:0 0.08px">5</span><span style="margin:0 0.08px">0</span><span style="margin:0 0.08px">0</span></span>
<span class="t" style="left:288.85px;top:206px;font-size:11.5px;font-style:italic;color:#3c3c3c;"><span style="margin:0 -0.50px">7</span><span style="margin:0 -0.50px">,</span><span style="margin:0 0.08px">5</span><span style="margin:0 0.08px">0</span><span style="margin:0 0.08px">0</span></span>
<span class="t" style="left:344.55px;top:206px;font-size:11.5px;font-style:italic;color:#3c3c3c;"><span style="display:inline-block;transform:scaleX(0.8);margin:0 -1.45px">1</span><span style="margin:0 -0.10px">2</span><span style="margin:0 -0.50px">,</span><span style="margin:0 0.08px">0</span><span style="margin:0 0.08px">0</span><span style="margin:0 0.08px">0</span></span>
<span class="t" style="left:408.55px;top:206px;font-size:11.5px;font-style:italic;color:#3c3c3c;"><span style="display:inline-block;transform:scaleX(0.8);margin:0 -1.45px">1</span><span style="margin:0 -0.10px">2</span><span style="margin:0 -0.50px">,</span><span style="margin:0 0.08px">0</span><span style="margin:0 0.08px">0</span><span style="margin:0 0.08px">0</span></span>
<span class="t" style="left:471.55px;top:206px;font-size:11.5px;font-style:italic;color:#3c3c3c;"><span style="display:inline-block;transform:scaleX(0.8);margin:0 -1.45px">1</span><span style="margin:0 -0.10px">2</span><span style="margin:0 -0.50px">,</span><span style="margin:0 0.08px">0</span><span style="margin:0 0.08px">0</span><span style="margin:0 0.08px">0</span></span>
<span class="t" style="left:532.20px;top:206px;font-size:11.5px;font-style:italic;color:#3c3c3c;"><span style="display:inline-block;transform:scaleX(0.8);margin:0 -1.45px">1</span><span style="margin:0 0.08px">4</span><span style="margin:0 -0.50px">,</span><span style="margin:0 0.08px">0</span><span style="margin:0 0.08px">0</span><span style="margin:0 0.08px">0</span></span>
<span class="t" style="left:596.20px;top:206px;font-size:11.5px;font-style:italic;color:#3c3c3c;"><span style="display:inline-block;transform:scaleX(0.8);margin:0 -1.45px">1</span><span style="margin:0 0.08px">4</span><span style="margin:0 -0.50px">,</span><span style="margin:0 0.08px">0</span><span style="margin:0 0.08px">0</span><span style="margin:0 0.08px">0</span></span>
<span class="t" style="left:660.35px;top:206px;font-size:11.5px;font-style:italic;color:#3c3c3c;"><span style="display:inline-block;transform:scaleX(0.8);margin:0 -1.45px">1</span><span style="margin:0 -0.50px">7</span><span style="margin:0 -0.50px">,</span><span style="margin:0 0.08px">5</span><span style="margin:0 0.08px">0</span><span style="margin:0 0.08px">0</span></span>
<span class="t" style="left:722.20px;top:206px;font-size:11.5px;font-style:italic;color:#3c3c3c;"><span style="display:inline-block;transform:scaleX(0.8);margin:0 -1.45px">1</span><span style="margin:0 0.08px">0</span><span style="margin:0 -0.50px">,</span><span style="margin:0 0.08px">5</span><span style="margin:0 0.08px">0</span><span style="margin:0 0.08px">0</span></span>
<span class="t" style="left:786.70px;top:206px;font-size:11.5px;font-style:italic;color:#3c3c3c;"><span style="margin:0 0.08px">9</span><span style="margin:0 -0.50px">,</span><span style="margin:0 0.08px">0</span><span style="margin:0 0.08px">0</span><span style="margin:0 0.08px">0</span></span>
<span class="t" style="left:847.70px;top:206px;font-size:11.5px;font-style:italic;color:#3c3c3c;"><span style="margin:0 0.08px">6</span><span style="margin:0 -0.50px">,</span><span style="margin:0 0.08px">0</span><span style="margin:0 0.08px">0</span><span style="margin:0 0.08px">0</span></span>
<span class="t" style="left:911.70px;top:206px;font-size:11.5px;font-style:italic;color:#3c3c3c;"><span style="margin:0 0.08px">6</span><span style="margin:0 -0.50px">,</span><span style="margin:0 0.08px">0</span><span style="margin:0 0.08px">0</span><span style="margin:0 0.08px">0</span></span>
<span class="t" style="left:226.75px;top:225px;font-size:11.5px;font-style:italic;color:#3c3c3c;"><span style="display:inline-block;transform:scaleX(0.8);margin:0 -1.45px">1</span><span style="margin:0 -0.50px">,</span><span style="margin:0 0.08px">5</span><span style="margin:0 0.08px">0</span><span style="margin:0 0.08px">0</span></span>
<span class="t" style="left:290.75px;top:225px;font-size:11.5px;font-style:italic;color:#3c3c3c;"><span style="display:inline-block;transform:scaleX(0.8);margin:0 -1.45px">1</span><span style="margin:0 -0.50px">,</span><span style="margin:0 0.08px">5</span><span style="margin:0 0.08px">0</span><span style="margin:0 0.08px">0</span></span>
<span class="t" style="left:356.45px;top:225px;font-size:11.5px;font-style:italic;color:#3c3c3c;"><span style="margin:0 0.08px">5</span><span style="margin:0 0.08px">0</span><span style="margin:0 0.08px">0</span></span>
<span class="t" style="left:420.45px;top:225px;font-size:11.5px;font-style:italic;color:#3c3c3c;"><span style="margin:0 0.08px">5</span><span style="margin:0 0.08px">0</span><span style="margin:0 0.08px">0</span></span>
<span class="t" style="left:477.75px;top:225px;font-size:11.5px;font-style:italic;color:#3c3c3c;"><span style="display:inline-block;transform:scaleX(0.8);margin:0 -1.45px">1</span><span style="margin:0 -0.50px">,</span><span style="margin:0 0.08px">0</span><span style="margin:0 0.08px">0</span><span style="margin:0 0.08px">0</span></span>
<span class="t" style="left:538.75px;top:225px;font-size:11.5px;font-style:italic;color:#3c3c3c;"><span style="display:inline-block;transform:scaleX(0.8);margin:0 -1.45px">1</span><span style="margin:0 -0.50px">,</span><span style="margin:0 0.08px">0</span><span style="margin:0 0.08px">0</span><span style="margin:0 0.08px">0</span></span>
<span class="t" style="left:600.05px;top:225px;font-size:11.5px;font-style:italic;color:#3c3c3c;"><span style="margin:0 -0.10px">3</span><span style="margin:0 -0.50px">,</span><span style="margin:0 0.08px">0</span><span style="margin:0 0.08px">0</span><span style="margin:0 0.08px">0</span></span>
<span class="t" style="left:663.05px;top:225px;font-size:11.5px;font-style:italic;color:#3c3c3c;"><span style="margin:0 -0.10px">3</span><span style="margin:0 -0.50px">,</span><span style="margin:0 0.08px">0</span><span style="margin:0 0.08px">0</span><span style="margin:0 0.08px">0</span></span>
<span class="t" style="left:726.05px;top:225px;font-size:11.5px;font-style:italic;color:#3c3c3c;"><span style="margin:0 -0.10px">3</span><span style="margin:0 -0.50px">,</span><span style="margin:0 0.08px">0</span><span style="margin:0 0.08px">0</span><span style="margin:0 0.08px">0</span></span>
<span class="t" style="left:789.75px;top:225px;font-size:11.5px;font-style:italic;color:#3c3c3c;"><span style="display:inline-block;transform:scaleX(0.8);margin:0 -1.45px">1</span><span style="margin:0 -0.50px">,</span><span style="margin:0 0.08px">0</span><span style="margin:0 0.08px">0</span><span style="margin:0 0.08px">0</span></span>
<span class="t" style="left:848.05px;top:225px;font-size:11.5px;font-style:italic;color:#3c3c3c;"><span style="margin:0 -0.10px">2</span><span style="margin:0 -0.50px">,</span><span style="margin:0 0.08px">0</span><span style="margin:0 0.08px">0</span><span style="margin:0 0.08px">0</span></span>
<span class="t" style="left:912.05px;top:225px;font-size:11.5px;font-style:italic;color:#3c3c3c;"><span style="margin:0 -0.10px">2</span><span style="margin:0 -0.50px">,</span><span style="margin:0 0.08px">0</span><span style="margin:0 0.08px">0</span><span style="margin:0 0.08px">0</span></span>
<span class="t" style="left:1021.00px;top:165px;font-size:14px;font-weight:bold;letter-spacing:0.054px;-webkit-text-stroke:0.35px #fff;color:#fff;">Total New MRR</span>
<span class="t" style="left:1060.40px;top:186px;font-size:13.5px;font-weight:bold;-webkit-text-stroke:0.35px #000;color:#000;"><span style="display:inline-block;transform:scaleX(0.74);margin:0 -1.38px">1</span><span style="margin:0 0.63px">4</span><span style="margin:0 0.63px">8</span><span style="margin:0 -0.32px">,</span><span style="margin:0 0.63px">0</span><span style="margin:0 0.63px">0</span><span style="margin:0 0.63px">0</span></span>
<svg style="left:0;top:0" width="1600" height="702"><rect x="1015.35" y="163.25" width="110.00" height="42.80" fill="none" stroke="#e30d18" stroke-width="3.10"/></svg>
<div class="r" style="left:101px;top:301px;width:1024px;height:53px;background:#355070;"></div>
<div class="r" style="left:101px;top:355px;width:101px;height:58px;background:#355070;"></div>
<div class="r" style="left:203px;top:355px;width:922px;height:58px;background:#f3f3f3;"></div>
<div class="r" style="left:452px;top:376px;width:499px;height:37px;background:#a2c4c9;"></div>
<div class="r" style="left:101px;top:333px;width:1024px;height:1px;background:#bcc4ce;"></div>
<div class="r" style="left:101px;top:354px;width:102px;height:1px;background:#bcc4ce;"></div>
<div class="r" style="left:203px;top:354px;width:923px;height:1px;background:#c9cdd3;"></div>
<div class="r" style="left:101px;top:375px;width:102px;height:1px;background:#bcc4ce;"></div>
<div class="r" style="left:203px;top:375px;width:923px;height:1px;background:#d2d2d2;"></div>
<div class="r" style="left:101px;top:394px;width:102px;height:1px;background:#bcc4ce;"></div>
<div class="r" style="left:203px;top:394px;width:923px;height:1px;background:#d2d2d2;"></div>
<div class="r" style="left:101px;top:413px;width:1025px;height:1px;background:#d6d6d6;"></div>
<div class="r" style="left:452px;top:394px;width:499px;height:1px;background:#b7cdd1;"></div>
<div class="r" style="left:202px;top:334px;width:1px;height:20px;background:#bcc4ce;"></div>
<div class="r" style="left:202px;top:355px;width:1px;height:58px;background:#c9cdd3;"></div>
<div class="r" style="left:263px;top:334px;width:1px;height:20px;background:#bcc4ce;"></div>
<div class="r" style="left:263px;top:355px;width:1px;height:58px;background:#d2d2d2;"></div>
<div class="r" style="left:327px;top:334px;width:1px;height:20px;background:#bcc4ce;"></div>
<div class="r" style="left:327px;top:355px;width:1px;height:58px;background:#d2d2d2;"></div>
<div class="r" style="left:387px;top:334px;width:1px;height:20px;background:#bcc4ce;"></div>
<div class="r" style="left:387px;top:355px;width:1px;height:58px;background:#d2d2d2;"></div>
<div class="r" style="left:451px;top:334px;width:1px;height:20px;background:#bcc4ce;"></div>
<div class="r" style="left:451px;top:355px;width:1px;height:58px;background:#d2d2d2;"></div>
<div class="r" style="left:514px;top:334px;width:1px;height:20px;background:#bcc4ce;"></div>
<div class="r" style="left:514px;top:355px;width:1px;height:58px;background:#d2d2d2;"></div>
<div class="r" style="left:514px;top:376px;width:1px;height:37px;background:#b7cdd1;"></div>
<div class="r" style="left:575px;top:334px;width:1px;height:20px;background:#bcc4ce;"></div>
<div class="r" style="left:575px;top:355px;width:1px;height:58px;background:#d2d2d2;"></div>
<div class="r" style="left:575px;top:376px;width:1px;height:37px;background:#b7cdd1;"></div>
<div class="r" style="left:639px;top:334px;width:1px;height:20px;background:#bcc4ce;"></div>
<div class="r" style="left:639px;top:355px;width:1px;height:58px;background:#d2d2d2;"></div>
<div class="r" style="left:639px;top:376px;width:1px;height:37px;background:#b7cdd1;"></div>
<div class="r" style="left:702px;top:334px;width:1px;height:20px;background:#bcc4ce;"></div>
<div class="r" style="left:702px;top:355px;width:1px;height:58px;background:#d2d2d2;"></div>
<div class="r" style="left:702px;top:376px;width:1px;height:37px;background:#b7cdd1;"></div>
<div class="r" style="left:765px;top:334px;width:1px;height:20px;background:#bcc4ce;"></div>
<div class="r" style="left:765px;top:355px;width:1px;height:58px;background:#d2d2d2;"></div>
<div class="r" style="left:765px;top:376px;width:1px;height:37px;background:#b7cdd1;"></div>
<div class="r" style="left:826px;top:334px;width:1px;height:20px;background:#bcc4ce;"></div>
<div class="r" style="left:826px;top:355px;width:1px;height:58px;background:#d2d2d2;"></div>
<div class="r" style="left:826px;top:376px;width:1px;height:37px;background:#b7cdd1;"></div>
<div class="r" style="left:887px;top:334px;width:1px;height:20px;background:#bcc4ce;"></div>
<div class="r" style="left:887px;top:355px;width:1px;height:58px;background:#d2d2d2;"></div>
<div class="r" style="left:887px;top:376px;width:1px;height:37px;background:#b7cdd1;"></div>
<div class="r" style="left:951px;top:334px;width:1px;height:20px;background:#bcc4ce;"></div>
<div class="r" style="left:951px;top:355px;width:1px;height:58px;background:#d2d2d2;"></div>
<div class="r" style="left:1015px;top:334px;width:1px;height:20px;background:#bcc4ce;"></div>
<div class="r" style="left:1015px;top:355px;width:1px;height:58px;background:#d2d2d2;"></div>
<div class="r" style="left:1125px;top:355px;width:1px;height:59px;background:#d6d6d6;"></div>
<div class="r" style="left:100px;top:301px;width:1px;height:113px;background:#e9ecef;"></div>
<span class="t" style="left:480.25px;top:299px;font-size:11.5px;font-weight:bold;letter-spacing:0.338px;-webkit-text-stroke:0.35px #fff;color:#fff;">New Commit Targets After &nbsp;Realizations (USD)</span>
<span class="t" style="left:596.10px;top:314px;font-size:11.5px;font-weight:bold;letter-spacing:0.476px;-webkit-text-stroke:0.35px #fff;color:#fff;">Korea</span>
<span class="t" style="left:214.35px;top:334px;font-size:11.5px;font-weight:bold;letter-spacing:0.413px;-webkit-text-stroke:0.35px #fff;color:#fff;">Jan-19</span>
<span class="t" style="left:277.15px;top:334px;font-size:11.5px;font-weight:bold;letter-spacing:0.167px;-webkit-text-stroke:0.35px #fff;color:#fff;">Feb-19</span>
<span class="t" style="left:338.40px;top:334px;font-size:11.5px;font-weight:bold;letter-spacing:0.466px;-webkit-text-stroke:0.35px #fff;color:#fff;">Mar-19</span>
<span class="t" style="left:401.35px;top:334px;font-size:11.5px;font-weight:bold;letter-spacing:0.215px;-webkit-text-stroke:0.35px #fff;color:#fff;">Apr-19</span>
<span class="t" style="left:462.85px;top:334px;font-size:11.5px;font-weight:bold;letter-spacing:0.502px;-webkit-text-stroke:0.35px #fff;color:#fff;">May-19</span>
<span class="t" style="left:526.30px;top:334px;font-size:11.5px;font-weight:bold;letter-spacing:0.307px;-webkit-text-stroke:0.35px #fff;color:#fff;">Jun-19</span>
<span class="t" style="left:591.00px;top:334px;font-size:11.5px;font-weight:bold;letter-spacing:0.193px;-webkit-text-stroke:0.35px #fff;color:#fff;">Jul-19</span>
<span class="t" style="left:651.40px;top:334px;font-size:11.5px;font-weight:bold;letter-spacing:0.285px;-webkit-text-stroke:0.35px #fff;color:#fff;">Aug-19</span>
<span class="t" style="left:715.10px;top:334px;font-size:11.5px;font-weight:bold;letter-spacing:0.258px;-webkit-text-stroke:0.35px #fff;color:#fff;">Sep-19</span>
<span class="t" style="left:777.60px;top:334px;font-size:11.5px;font-weight:bold;letter-spacing:0.442px;-webkit-text-stroke:0.35px #fff;color:#fff;">Oct-19</span>
<span class="t" style="left:837.60px;top:334px;font-size:11.5px;font-weight:bold;letter-spacing:0.331px;-webkit-text-stroke:0.35px #fff;color:#fff;">Nov-19</span>
<span class="t" style="left:900.60px;top:334px;font-size:11.5px;font-weight:bold;letter-spacing:0.256px;-webkit-text-stroke:0.35px #fff;color:#fff;">Dec-19</span>
<span class="t" style="left:126.20px;top:355px;font-size:11.5px;font-weight:bold;letter-spacing:-0.172px;-webkit-text-stroke:0.35px #fff;color:#fff;">New MRR</span>
<span class="t" style="left:104.95px;top:375px;font-size:11.5px;font-weight:bold;letter-spacing:0.391px;-webkit-text-stroke:0.35px #fff;color:#fff;">New Acquisition</span>
<span class="t" style="left:121.80px;top:394px;font-size:11.5px;font-weight:bold;letter-spacing:0.331px;-webkit-text-stroke:0.35px #fff;color:#fff;">Expansion</span>
<span class="t" style="left:224.71px;top:355px;font-size:11.5px;font-weight:bold;-webkit-text-stroke:0.35px #000;color:#000;"><span style="display:inline-block;transform:scaleX(0.74);margin:0 -1.30px">1</span><span style="margin:0 -0.35px">,</span><span style="margin:0 0.32px">9</span><span style="margin:0 0.32px">9</span><span style="margin:0 0.32px">0</span></span>
<span class="t" style="left:291.94px;top:355px;font-size:11.5px;font-weight:bold;-webkit-text-stroke:0.35px #000;color:#000;"><span style="display:inline-block;transform:scaleX(0.74);margin:0 -1.30px">1</span><span style="margin:0 -0.35px">,</span><span style="margin:0 0.32px">9</span><span style="display:inline-block;transform:scaleX(0.74);margin:0 -1.30px">1</span><span style="margin:0 0.32px">0</span></span>
<div class="r" style="left:369.9px;top:364.4px;width:6.2px;height:2px;background:#000;"></div>
<span class="t" style="left:410.11px;top:355px;font-size:11.5px;font-weight:bold;-webkit-text-stroke:0.35px #000;color:#000;"><span style="margin:0 0.32px">5</span><span style="margin:0 -0.35px">,</span><span style="margin:0 0.32px">9</span><span style="margin:0 0.00px">7</span><span style="margin:0 0.32px">9</span></span>
<span class="t" style="left:471.91px;top:355px;font-size:11.5px;font-weight:bold;-webkit-text-stroke:0.35px #000;color:#000;"><span style="display:inline-block;transform:scaleX(0.74);margin:0 -1.30px">1</span><span style="display:inline-block;transform:scaleX(0.74);margin:0 -1.30px">1</span><span style="margin:0 -0.35px">,</span><span style="margin:0 0.32px">0</span><span style="margin:0 0.32px">0</span><span style="margin:0 0.32px">0</span></span>
<span class="t" style="left:532.91px;top:355px;font-size:11.5px;font-weight:bold;-webkit-text-stroke:0.35px #000;color:#000;"><span style="display:inline-block;transform:scaleX(0.74);margin:0 -1.30px">1</span><span style="display:inline-block;transform:scaleX(0.74);margin:0 -1.30px">1</span><span style="margin:0 -0.35px">,</span><span style="margin:0 0.32px">0</span><span style="margin:0 0.32px">0</span><span style="margin:0 0.32px">0</span></span>
<span class="t" style="left:593.68px;top:355px;font-size:11.5px;font-weight:bold;-webkit-text-stroke:0.35px #000;color:#000;"><span style="display:inline-block;transform:scaleX(0.74);margin:0 -1.30px">1</span><span style="margin:0 0.32px">4</span><span style="margin:0 -0.35px">,</span><span style="margin:0 0.32px">5</span><span style="margin:0 0.32px">0</span><span style="margin:0 0.32px">0</span></span>
<span class="t" style="left:656.68px;top:355px;font-size:11.5px;font-weight:bold;-webkit-text-stroke:0.35px #000;color:#000;"><span style="display:inline-block;transform:scaleX(0.74);margin:0 -1.30px">1</span><span style="margin:0 0.32px">4</span><span style="margin:0 -0.35px">,</span><span style="margin:0 0.32px">5</span><span style="margin:0 0.32px">0</span><span style="margin:0 0.32px">0</span></span>
<span class="t" style="left:719.68px;top:355px;font-size:11.5px;font-weight:bold;-webkit-text-stroke:0.35px #000;color:#000;"><span style="display:inline-block;transform:scaleX(0.74);margin:0 -1.30px">1</span><span style="margin:0 0.32px">2</span><span style="margin:0 -0.35px">,</span><span style="margin:0 0.32px">0</span><span style="margin:0 0.32px">0</span><span style="margin:0 0.32px">0</span></span>
<span class="t" style="left:780.68px;top:355px;font-size:11.5px;font-weight:bold;-webkit-text-stroke:0.35px #000;color:#000;"><span style="display:inline-block;transform:scaleX(0.74);margin:0 -1.30px">1</span><span style="margin:0 0.32px">2</span><span style="margin:0 -0.35px">,</span><span style="margin:0 0.32px">0</span><span style="margin:0 0.32px">0</span><span style="margin:0 0.32px">0</span></span>
<span class="t" style="left:845.48px;top:355px;font-size:11.5px;font-weight:bold;-webkit-text-stroke:0.35px #000;color:#000;"><span style="margin:0 0.32px">8</span><span style="margin:0 -0.35px">,</span><span style="margin:0 0.32px">5</span><span style="margin:0 0.32px">0</span><span style="margin:0 0.32px">0</span></span>
<span class="t" style="left:909.48px;top:355px;font-size:11.5px;font-weight:bold;-webkit-text-stroke:0.35px #000;color:#000;"><span style="margin:0 0.32px">8</span><span style="margin:0 -0.35px">,</span><span style="margin:0 0.32px">5</span><span style="margin:0 0.32px">0</span><span style="margin:0 0.32px">0</span></span>
<div class="r" style="left:247.3px;top:384.8px;width:4.8px;height:1.3px;background:#333;"></div>
<span class="t" style="left:290.75px;top:375px;font-size:11.5px;font-style:italic;color:#3c3c3c;"><span style="display:inline-block;transform:scaleX(0.8);margin:0 -1.45px">1</span><span style="margin:0 -0.50px">,</span><span style="margin:0 0.08px">4</span><span style="margin:0 0.08px">6</span><span style="margin:0 0.08px">4</span></span>
<div class="r" style="left:371.3px;top:384.8px;width:4.8px;height:1.3px;background:#333;"></div>
<span class="t" style="left:415.80px;top:375px;font-size:11.5px;font-style:italic;color:#3c3c3c;"><span style="margin:0 -0.10px">3</span><span style="margin:0 -0.50px">,</span><span style="display:inline-block;transform:scaleX(0.8);margin:0 -1.45px">1</span><span style="margin:0 -0.10px">2</span><span style="margin:0 -0.10px">3</span></span>
<span class="t" style="left:468.65px;top:375px;font-size:11.5px;font-style:italic;color:#3c3c3c;"><span style="display:inline-block;transform:scaleX(0.8);margin:0 -1.45px">1</span><span style="margin:0 0.08px">0</span><span style="margin:0 0.08px">0</span><span style="margin:0 0.08px">0</span><span style="margin:0 0.08px">0</span></span>
<span class="t" style="left:530.65px;top:375px;font-size:11.5px;font-style:italic;color:#3c3c3c;"><span style="display:inline-block;transform:scaleX(0.8);margin:0 -1.45px">1</span><span style="margin:0 0.08px">0</span><span style="margin:0 0.08px">0</span><span style="margin:0 0.08px">0</span><span style="margin:0 0.08px">0</span></span>
<span class="t" style="left:593.33px;top:375px;font-size:11.5px;font-style:italic;color:#3c3c3c;"><span style="display:inline-block;transform:scaleX(0.8);margin:0 -1.45px">1</span><span style="margin:0 -0.10px">3</span><span style="margin:0 0.08px">0</span><span style="margin:0 0.08px">0</span><span style="margin:0 0.08px">0</span></span>
<span class="t" style="left:656.83px;top:375px;font-size:11.5px;font-style:italic;color:#3c3c3c;"><span style="display:inline-block;transform:scaleX(0.8);margin:0 -1.45px">1</span><span style="margin:0 -0.10px">3</span><span style="margin:0 0.08px">0</span><span style="margin:0 0.08px">0</span><span style="margin:0 0.08px">0</span></span>
<span class="t" style="left:719.65px;top:375px;font-size:11.5px;font-style:italic;color:#3c3c3c;"><span style="display:inline-block;transform:scaleX(0.8);margin:0 -1.45px">1</span><span style="margin:0 0.08px">0</span><span style="margin:0 0.08px">0</span><span style="margin:0 0.08px">0</span><span style="margin:0 0.08px">0</span></span>
<span class="t" style="left:781.65px;top:375px;font-size:11.5px;font-style:italic;color:#3c3c3c;"><span style="display:inline-block;transform:scaleX(0.8);margin:0 -1.45px">1</span><span style="margin:0 0.08px">0</span><span style="margin:0 0.08px">0</span><span style="margin:0 0.08px">0</span><span style="margin:0 0.08px">0</span></span>
<span class="t" style="left:844.98px;top:375px;font-size:11.5px;font-style:italic;color:#3c3c3c;"><span style="margin:0 -0.50px">7</span><span style="margin:0 0.08px">0</span><span style="margin:0 0.08px">0</span><span style="margin:0 0.08px">0</span></span>
<span class="t" style="left:907.48px;top:375px;font-size:11.5px;font-style:italic;color:#3c3c3c;"><span style="margin:0 -0.50px">7</span><span style="margin:0 0.08px">0</span><span style="margin:0 0.08px">0</span><span style="margin:0 0.08px">0</span></span>
<span class="t" style="left:226.75px;top:394px;font-size:11.5px;font-style:italic;color:#3c3c3c;"><span style="display:inline-block;transform:scaleX(0.8);margin:0 -1.45px">1</span><span style="margin:0 -0.50px">,</span><span style="margin:0 0.08px">9</span><span style="margin:0 0.08px">9</span><span style="margin:0 0.08px">0</span></span>
<span class="t" style="left:296.45px;top:394px;font-size:11.5px;font-style:italic;color:#3c3c3c;"><span style="margin:0 0.08px">4</span><span style="margin:0 0.08px">4</span><span style="margin:0 0.08px">6</span></span>
<div class="r" style="left:371.3px;top:403.8px;width:4.8px;height:1.3px;background:#333;"></div>
<span class="t" style="left:412.05px;top:394px;font-size:11.5px;font-style:italic;color:#3c3c3c;"><span style="margin:0 -0.10px">2</span><span style="margin:0 -0.50px">,</span><span style="margin:0 0.08px">8</span><span style="margin:0 0.08px">5</span><span style="margin:0 0.08px">6</span></span>
<span class="t" style="left:471.93px;top:394px;font-size:11.5px;font-style:italic;color:#3c3c3c;"><span style="display:inline-block;transform:scaleX(0.8);margin:0 -1.45px">1</span><span style="margin:0 0.08px">0</span><span style="margin:0 0.08px">0</span><span style="margin:0 0.08px">0</span></span>
<span class="t" style="left:533.92px;top:394px;font-size:11.5px;font-style:italic;color:#3c3c3c;"><span style="display:inline-block;transform:scaleX(0.8);margin:0 -1.45px">1</span><span style="margin:0 0.08px">0</span><span style="margin:0 0.08px">0</span><span style="margin:0 0.08px">0</span></span>
<span class="t" style="left:596.42px;top:394px;font-size:11.5px;font-style:italic;color:#3c3c3c;"><span style="display:inline-block;transform:scaleX(0.8);margin:0 -1.45px">1</span><span style="margin:0 0.08px">5</span><span style="margin:0 0.08px">0</span><span style="margin:0 0.08px">0</span></span>
<span class="t" style="left:659.92px;top:394px;font-size:11.5px;font-style:italic;color:#3c3c3c;"><span style="display:inline-block;transform:scaleX(0.8);margin:0 -1.45px">1</span><span style="margin:0 0.08px">5</span><span style="margin:0 0.08px">0</span><span style="margin:0 0.08px">0</span></span>
<span class="t" style="left:721.58px;top:394px;font-size:11.5px;font-style:italic;color:#3c3c3c;"><span style="margin:0 -0.10px">2</span><span style="margin:0 0.08px">0</span><span style="margin:0 0.08px">0</span><span style="margin:0 0.08px">0</span></span>
<span class="t" style="left:783.58px;top:394px;font-size:11.5px;font-style:italic;color:#3c3c3c;"><span style="margin:0 -0.10px">2</span><span style="margin:0 0.08px">0</span><span style="margin:0 0.08px">0</span><span style="margin:0 0.08px">0</span></span>
<span class="t" style="left:845.92px;top:394px;font-size:11.5px;font-style:italic;color:#3c3c3c;"><span style="display:inline-block;transform:scaleX(0.8);margin:0 -1.45px">1</span><span style="margin:0 0.08px">5</span><span style="margin:0 0.08px">0</span><span style="margin:0 0.08px">0</span></span>
<span class="t" style="left:908.42px;top:394px;font-size:11.5px;font-style:italic;color:#3c3c3c;"><span style="display:inline-block;transform:scaleX(0.8);margin:0 -1.45px">1</span><span style="margin:0 0.08px">5</span><span style="margin:0 0.08px">0</span><span style="margin:0 0.08px">0</span></span>
<span class="t" style="left:1021.00px;top:334px;font-size:14px;font-weight:bold;letter-spacing:0.054px;-webkit-text-stroke:0.35px #fff;color:#fff;">Total New MRR</span>
<span class="t" style="left:1067.10px;top:355px;font-size:13.5px;font-weight:bold;-webkit-text-stroke:0.35px #000;color:#000;"><span style="display:inline-block;transform:scaleX(0.74);margin:0 -1.48px">1</span><span style="margin:0 0.45px">0</span><span style="display:inline-block;transform:scaleX(0.74);margin:0 -1.48px">1</span><span style="margin:0 -0.38px">,</span><span style="margin:0 0.45px">8</span><span style="margin:0 0.08px">7</span><span style="margin:0 0.45px">9</span></span>
<svg style="left:0;top:0" width="1600" height="702"><rect x="1015.35" y="332.55" width="110.00" height="42.80" fill="none" stroke="#e30d18" stroke-width="3.10"/></svg>
<div class="r" style="left:101px;top:300px;width:1024px;height:1px;background:#8696a9;"></div>
<div class="r" style="left:1215px;top:131px;width:88px;height:32px;background:#f3f3f3;"></div>
<div class="r" style="left:1304px;top:131px;width:88px;height:32px;background:#a2c4c9;"></div>
<div class="r" style="left:1214px;top:131px;width:1px;height:33px;background:#c4c4c4;"></div>
<div class="r" style="left:1214px;top:163px;width:179px;height:1px;background:#c4c4c4;"></div>
<div class="r" style="left:1303px;top:131px;width:1px;height:32px;background:#d0d0d0;"></div>
<div class="r" style="left:1392px;top:131px;width:1px;height:33px;background:#b5c9cc;"></div>
<span class="t" style="left:1234.90px;top:138px;font-size:11.5px;letter-spacing:0.233px;color:#1f1f1f;">Don't Edit</span>
<span class="t" style="left:1338.20px;top:138px;font-size:11.5px;letter-spacing:0.061px;color:#1f1f1f;">Edit</span>
<div class="r" style="left:1481px;top:470px;width:86px;height:18.4px;border:2px solid #1a6fe0;"></div>
<div class="r" style="left:1566.5px;top:488px;width:7px;height:7px;background:#fff;"></div>
<div class="r" style="left:1567.3px;top:488.6px;width:5.8px;height:5.6px;background:#1a6fe0;"></div>
<span class="t" style="left:104.40px;top:470px;font-size:14px;font-weight:bold;letter-spacing:0.389px;-webkit-text-stroke:0.35px #000;color:#000;">Instructions</span>
<svg style="left:0;top:0" width="200" height="702"><path d="M104.5 497.7 L107.2 496.3 H108.5 V506 H107.1 V497.8 L104.5 499.0 Z" fill="#1c1c1c"/><rect x="108.9" y="501.6" width="5" height="1.35" fill="#1c1c1c"/></svg>
<span class="t" style="left:118.80px;top:491px;font-size:14px;letter-spacing:0.764px;color:#1c1c1c;">Commit Targets above are the targets that you have </span>
<span class="t" style="left:482.80px;top:491px;font-size:14px;font-weight:bold;letter-spacing:0.256px;-webkit-text-stroke:0.35px #000;color:#000;">committed to realize 100%</span>
<span class="t" style="left:664.00px;top:491px;font-size:14px;letter-spacing:0.596px;color:#1c1c1c;"> in the beginning of the year.</span>
<span class="t" style="left:104.40px;top:513px;font-size:14px;letter-spacing:0.694px;color:#1c1c1c;">2- New Commit Targets are the targets that you are going to reallocate after first 4 months' realizations in order to reach the same committed </span>
<span class="t" style="left:1076.10px;top:513px;font-size:14px;font-weight:bold;letter-spacing:0.004px;-webkit-text-stroke:0.35px #000;color:#000;">Total New MRR</span>
<span class="t" style="left:1177.00px;top:513px;font-size:14px;letter-spacing:0.654px;color:#1c1c1c;"> of your country.</span>
<span class="t" style="left:104.40px;top:534px;font-size:14px;letter-spacing:0.617px;color:#1c1c1c;">3- Please reallocate your new targets to the </span>
<span class="t" style="left:405.50px;top:534px;font-size:14px;font-weight:bold;letter-spacing:0.223px;-webkit-text-stroke:0.35px #000;color:#000;">green cells.</span>
<span class="t" style="left:104.40px;top:556px;font-size:14px;letter-spacing:0.496px;color:#1c1c1c;">4- Please make sure </span>
<span class="t" style="left:246.10px;top:556px;font-size:14px;font-weight:bold;letter-spacing:0.069px;-webkit-text-stroke:0.35px #000;color:#000;">"Total New MRR" Cells are equal</span>
<span class="t" style="left:465.00px;top:556px;font-size:14px;letter-spacing:0.669px;color:#1c1c1c;"> after reallocation.</span>
<span class="t" style="left:104.40px;top:615px;font-size:14px;font-weight:bold;letter-spacing:0.251px;-webkit-text-stroke:0.35px #000;color:#000;">Notes</span>
<svg style="left:0;top:0" width="200" height="702"><path d="M104.5 642.7 L107.2 641.3 H108.5 V651 H107.1 V642.8 L104.5 644.0 Z" fill="#1c1c1c"/><rect x="108.9" y="646.6" width="5" height="1.35" fill="#1c1c1c"/></svg>
<span class="t" style="left:118.30px;top:636px;font-size:14px;letter-spacing:0.605px;color:#1c1c1c;">You are allowed to redistribute some targets from New Acquisition to Expansion or vice versa as long as these changes are based on </span>
<span class="t" style="left:1024.40px;top:637px;font-size:13.5px;font-weight:bold;letter-spacing:-0.235px;-webkit-text-stroke:0.35px #000;color:#000;">PLAN not HOPE.</span>
<span class="t" style="left:104.40px;top:658px;font-size:14px;letter-spacing:0.643px;color:#1c1c1c;">2- Let's remember that merely playing with numbers will not change anything. These actions will come up to life as you take actions starting from </span>
<span class="t" style="left:1094.90px;top:658px;font-size:14px;font-weight:bold;letter-spacing:0.143px;-webkit-text-stroke:0.35px #000;color:#000;">NOW</span>
<span class="t" style="left:1129.40px;top:658px;font-size:14px;letter-spacing:0.668px;color:#1c1c1c;"> since whatever you do better now will affect 2-3 Months from now.</span>
</body></html>
